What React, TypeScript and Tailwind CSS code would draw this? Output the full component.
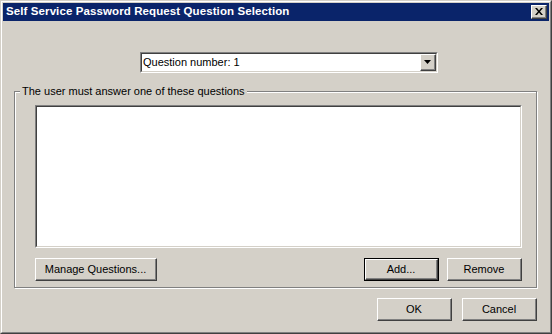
import clsx from "clsx";

const Btn = ({ label, className, isDefault }: { label: string; className: string; isDefault?: boolean }) => (
  <div className={clsx("h-[23px] flex", className, isDefault ? "border border-black" : "")}>
    <div className="flex-1 flex border border-white border-r-[#404040] border-b-[#404040]">
      <div className="flex-1 flex items-center justify-center border-r border-b border-[#808080] pt-px">
        {label}
      </div>
    </div>
  </div>
);

const App = () => {
  return (
    <div className="w-[552px] h-[334px] bg-[#d4d0c8] font-['Liberation_Sans',Arial,sans-serif] text-[11px] text-black border border-[#d4d0c8] border-r-[#404040] border-b-[#404040]">
      <div className="h-full flex flex-col border border-white border-r-[#808080] border-b-[#808080] p-px">
        <div className="h-[18px] bg-[#0a246a] flex items-center pl-[3px] pr-[2px]">
          <span className="text-white font-bold text-[11.5px] tracking-[0.1px] leading-none">
            Self Service Password Request Question Selection
          </span>
          <div className="ml-auto w-[16px] h-[14px] bg-[#d4d0c8] flex border border-white border-r-[#404040] border-b-[#404040]">
            <div className="flex-1 flex items-center justify-center border-r border-b border-[#808080]">
              <svg width="8" height="7" viewBox="0 0 8 7">
                <path d="M0 0h2l2 2.5L6 0h2L5 3.5 8 7H6L4 4.5 2 7H0l3-3.5z" fill="#000" />
              </svg>
            </div>
          </div>
        </div>

        <div className="flex flex-col pl-[11px]">
          <div className="mt-[31px] ml-[126px] w-[298px] h-[21px] flex border border-[#808080] border-r-white border-b-white">
            <div className="flex-1 flex bg-white border border-[#404040] border-r-[#d4d0c8] border-b-[#d4d0c8]">
              <span className="flex-1 flex items-center pl-[1px]">Question number: 1</span>
              <div className="w-[16px] bg-[#d4d0c8] flex border border-white border-r-[#404040] border-b-[#404040]">
                <div className="flex-1 flex items-center justify-center border-r border-b border-[#808080]">
                  <svg width="7" height="4" viewBox="0 0 7 4">
                    <path d="M0 0h7L3.5 4z" fill="#000" />
                  </svg>
                </div>
              </div>
            </div>
          </div>

          <div className="relative mt-[18px] w-[523px] h-[197px] border border-[#808080] shadow-[inset_1px_1px_0_#fff,1px_1px_0_#fff] pt-[13px] pl-[20px]">
            <span className="absolute left-[5px] -top-[7px] bg-[#d4d0c8] px-[2px] leading-[13px]">
              The user must answer one of these questions
            </span>
            <div className="w-[487px] h-[143px] flex border border-[#808080] border-r-white border-b-white">
              <div className="flex-1 bg-white border border-[#404040] border-r-[#d4d0c8] border-b-[#d4d0c8]" />
            </div>
            <div className="w-[487px] mt-[10px] flex">
              <Btn label="Manage Questions..." className="w-[122px]" />
              <Btn label="Add..." className="w-[75px] ml-auto" isDefault />
              <Btn label="Remove" className="w-[75px] ml-[8px]" />
            </div>
          </div>

          <div className="w-[523px] mt-[10px] flex justify-end gap-[10px]">
            <Btn label="OK" className="w-[75px]" />
            <Btn label="Cancel" className="w-[75px]" />
          </div>
        </div>
      </div>
    </div>
  );
};

export default App;
